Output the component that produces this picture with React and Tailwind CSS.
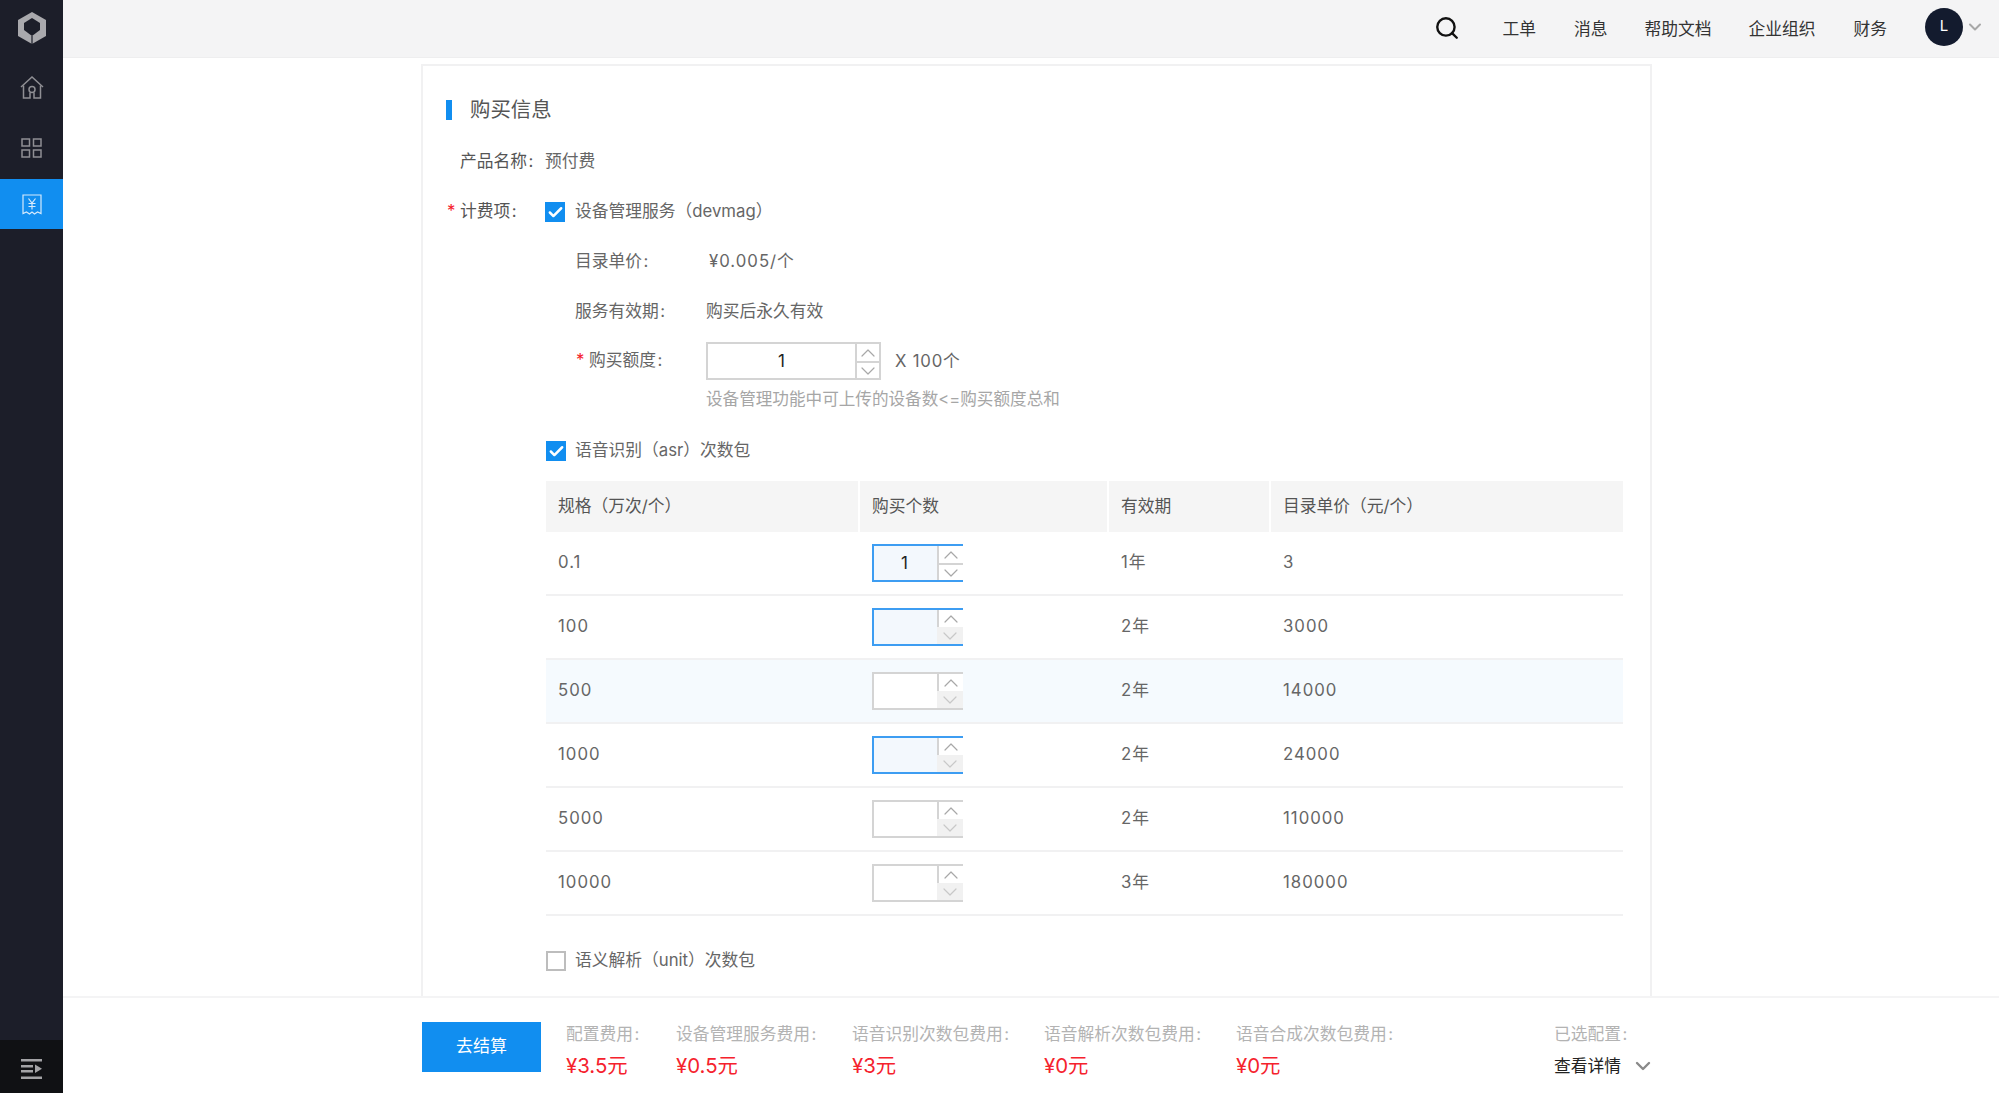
import React from 'react';
import { Search, ChevronDown, ChevronUp, Check } from 'lucide-react';

const ROWS = [
  { size: '0.1', value: '1', term: '1', price: '3', focus: true },
  { size: '100', term: '2', price: '3000', focus: true, downOff: true },
  { size: '500', term: '2', price: '14000', hover: true, downOff: true },
  { size: '1000', term: '2', price: '24000', focus: true, downOff: true },
  { size: '5000', term: '2', price: '110000', downOff: true },
  { size: '10000', term: '3', price: '180000', downOff: true },
];

const FEES = [
  { label: '配置费用\u200a:', value: '¥3.5元', width: 'w-[110px]' },
  { label: '设备管理服务费用\u200a:', value: '¥0.5元', width: 'w-[176px]' },
  { label: '语音识别次数包费用\u200a:', value: '¥3元', width: 'w-[192px]' },
  { label: '语音解析次数包费用\u200a:', value: '¥0元', width: 'w-[192px]' },
  { label: '语音合成次数包费用\u200a:', value: '¥0元', width: 'w-[318px]' },
];

function Logo() {
  return (
    <svg width="28" height="32" viewBox="0 0 28 32">
      <path d="M14 0 28 8v16l-14 8-14-8V8z" fill="#a9a9ad" />
      <path d="M14 6 22 11V18L14 24 6 18V11z" fill="#1c1e29" />
      <path d="M14 24v8" stroke="#1c1e29" strokeWidth="1.200" />
    </svg>
  );
}

function HomeIcon() {
  return (
    <svg width="24" height="23" viewBox="0 0 24 23" fill="none" stroke="#8f8f94" strokeWidth="1.500">
      <path d="M1 11 12 1l11 10" />
      <path d="M3.500 9.500V22H10V16.500M20.500 9.500V22H14V16.500" />
      <circle cx="12" cy="13.500" r="3" />
    </svg>
  );
}

function GridIcon() {
  return (
    <svg width="21" height="20" viewBox="0 0 21 20" fill="none" stroke="#8f8f94" strokeWidth="1.500">
      <rect x="1" y="1" width="7.500" height="7" />
      <rect x="12.500" y="1" width="7.500" height="7" />
      <rect x="1" y="12" width="7.500" height="7" />
      <rect x="12.500" y="12" width="7.500" height="7" />
    </svg>
  );
}

function ReceiptIcon() {
  return (
    <svg width="20" height="21" viewBox="0 0 20 21" fill="none" stroke="#d6eafc" strokeWidth="1.200">
      <path d="M1 1H19V19.500L15.500 18 12.500 20 10 18 7.500 20 4.500 18 1 19.500z" />
      <path d="M6.500 4.500 10 9l3.500-4.500M10 9v6.500M6.500 9.500H13.500M6.500 12.500H13.500" />
    </svg>
  );
}

function CollapseIcon() {
  return (
    <svg width="22" height="20" viewBox="0 0 22 20" fill="#a3a3a6">
      <rect x="0" y="0" width="21" height="2.500" />
      <rect x="0" y="6" width="12" height="2.500" />
      <rect x="0" y="11" width="12" height="2.500" />
      <rect x="0" y="17.500" width="21" height="2.500" />
      <path d="M14 5.500v8.500l7-4.250z" />
    </svg>
  );
}

function Stepper({ value, focus, downOff, wide }) {
  const line = focus ? 'border-[#3d9df2]' : 'border-[#d4d4d4]';
  return (
    <div className={`flex h-[38px] ${wide ? 'w-[175px]' : 'w-[91px]'}`}>
      <div className={`flex-1 flex items-center justify-center border-2 border-r-0 pt-[1px] text-[17px] text-[#222] ${line} ${focus ? 'bg-[#f3f8fd]' : 'bg-white'} ${wide ? '' : 'pr-[2px]'}`}>
        {value}
      </div>
      <div className={`w-[26px] flex flex-col border-y-2 ${line} ${wide ? 'border-r-2' : ''} bg-white`}>
        <div className="h-1/2 flex items-center justify-center overflow-hidden border-l-2 border-[#d4d4d4] text-[#a8a8a8]">
          <ChevronUp size={24} strokeWidth={1.200} className="shrink-0" />
        </div>
        <div className={`h-1/2 flex items-center justify-center overflow-hidden ${downOff ? 'bg-[#f1f1f1] text-[#c8c8c8]' : 'border-l-2 border-t-2 border-[#d4d4d4] text-[#a8a8a8]'}`}>
          <ChevronDown size={24} strokeWidth={1.200} className="shrink-0" />
        </div>
      </div>
    </div>
  );
}

function CheckBox({ checked }) {
  return checked ? (
    <span className="w-[20px] h-[20px] flex items-center justify-center bg-[#118ef0] text-white">
      <Check size={17} strokeWidth={3.500} />
    </span>
  ) : (
    <span className="w-[20px] h-[20px] border-2 border-[#bdbdbd] bg-white" />
  );
}

export default function App() {
  return (
    <div lang="zh-CN" className="h-screen flex overflow-hidden bg-white text-[16.750px] text-[#666] font-['Inter','Noto_Sans_CJK_SC',sans-serif]">
      {/* side nav */}
      <aside className="w-[63px] shrink-0 flex flex-col bg-[#1c1e29]">
        <div className="h-[56px] flex items-center justify-center"><Logo /></div>
        <div className="h-[62px] flex items-center justify-center"><HomeIcon /></div>
        <div className="h-[61px] pb-[2px] flex items-center justify-center"><GridIcon /></div>
        <div className="h-[50px] flex items-center justify-center bg-[#118ef0]"><ReceiptIcon /></div>
        <div className="flex-1" />
        <div className="h-[53px] pt-[4px] flex items-center justify-center bg-[#101114]"><CollapseIcon /></div>
      </aside>

      <div className="flex-1 min-w-0 flex flex-col">
        {/* top bar */}
        <header className="h-[58px] shrink-0 flex items-center justify-end bg-[#f4f4f5] border-b border-[#eeeeef] text-[#333]">
          <Search size={26} strokeWidth={2.200} className="text-[#111] mr-[42px] mb-[1px]" />
          <span className="mr-[38px] mt-[2px]">工单</span>
          <span className="mr-[37px] mt-[2px]">消息</span>
          <span className="mr-[37px] mt-[2px]">帮助文档</span>
          <span className="mr-[38px] mt-[2px]">企业组织</span>
          <span className="mr-[38px] mt-[2px]">财务</span>
          <span className="w-[38px] h-[38px] mb-[4px] rounded-full bg-[#131b2e] text-white text-[15px] flex items-center justify-center">L</span>
          <ChevronDown size={20} strokeWidth={2.400} className="text-[#a8a8a8] ml-[2px] mr-[14px] mb-[4px]" />
        </header>

        {/* form panel */}
        <main className="flex-1 min-h-0 overflow-hidden">
          <div className="ml-[358px] mt-[6px] w-[1231px] border-2 border-[#f1f1f2] pl-[22px] pr-[26px] pt-[34px]">
            <div className="ml-[1px] h-[20px] flex items-center">
              <span className="w-[6px] h-[20px] bg-[#118ef0]" />
              <h2 className="ml-[18px] text-[20.400px] text-[#555]">购买信息</h2>
            </div>

            <div className="mt-[17px] h-[50px] flex items-center">
              <span className="ml-[15px] w-[85px] text-[#555]">产品名称{'\u200a'}:</span>
              <span>预付费</span>
            </div>
            <div className="h-[50px] flex items-center">
              <span className="w-[15px] pl-[2px] text-[#f5222d]">*</span>
              <span className="w-[85px] text-[#555]">计费项{'\u200a'}:</span>
              <CheckBox checked />
              <span className="ml-[10px]">设备管理服务（devmag）</span>
            </div>
            <div className="h-[50px] flex items-center pl-[130px]">
              <span className="w-[134px]">目录单价{'\u200a'}:</span>
              <span><span className="tracking-[1px]">¥0.005/</span>个</span>
            </div>
            <div className="h-[50px] flex items-center pl-[130px]">
              <span className="w-[131px]">服务有效期{'\u200a'}:</span>
              <span>购买后永久有效</span>
            </div>

            <div className="mt-[5px] flex items-center pl-[131px]">
              <span className="w-[13px] text-[#f5222d]">*</span>
              <span className="w-[117px]">购买额度{'\u200a'}:</span>
              <Stepper value="1" wide />
              <span className="ml-[14px] mt-[2px]"><span className="tracking-[0.800px]">X 100</span>个</span>
            </div>
            <div className="mt-[7px] h-[24px] leading-[24px] pl-[261px] text-[16.600px] text-[#a6a6a6]">设备管理功能中可上传的设备数&lt;=购买额度总和</div>

            <div className="mt-[30px] h-[20px] flex items-center pl-[101px]">
              <CheckBox checked />
              <span className="ml-[9px]">语音识别（asr）次数包</span>
            </div>

            <div className="mt-[20px] ml-[101px] w-[1077px]">
              <div className="h-[51px] grid grid-cols-[314px_249px_162px_352px] text-[#555]">
                <div className="pl-3 flex items-center bg-[#f5f5f5] border-r-2 border-white">规格（万次/个）</div>
                <div className="pl-3 flex items-center bg-[#f5f5f5] border-r-2 border-white">购买个数</div>
                <div className="pl-3 flex items-center bg-[#f5f5f5] border-r-2 border-white">有效期</div>
                <div className="pl-3 flex items-center bg-[#f5f5f5]">目录单价（元/个）</div>
              </div>
              {ROWS.map(row => (
                <div key={row.size} className={`h-[64px] grid grid-cols-[314px_249px_162px_352px] items-center border-b-2 border-[#f1f1f2] ${row.hover ? 'bg-[#f5fafe]' : ''}`}>
                  <div className="pl-3 pb-[1px] tracking-[1px]">{row.size}</div>
                  <div className="pl-3"><Stepper value={row.value} focus={row.focus} downOff={row.downOff} /></div>
                  <div className="pl-3 pb-[1px]"><span className="tracking-[1px]">{row.term}</span>年</div>
                  <div className="pl-3 pb-[1px] tracking-[1px]">{row.price}</div>
                </div>
              ))}
            </div>

            <div className="mt-[35px] h-[20px] flex items-center pl-[101px]">
              <CheckBox />
              <span className="ml-[9px]">语义解析（unit）次数包</span>
            </div>
            <div className="h-[60px]" />
          </div>
        </main>

        {/* fee footer */}
        <footer className="h-[97px] shrink-0 flex items-center pl-[359px] pt-[3px] bg-white border-t-2 border-[#f4f4f5]">
          <button className="w-[119px] h-[50px] bg-[#118ef0] text-white text-[17px] mr-[25px]">去结算</button>
          {FEES.map(fee => (
            <div key={fee.label} className={`${fee.width} mt-[5px] flex flex-col gap-[8px]`}>
              <span className="leading-[24px] text-[#b3b3b3]">{fee.label}</span>
              <span className="leading-[24px] text-[20.400px] text-[#f5222d]">{fee.value}</span>
            </div>
          ))}
          <div className="mt-[5px] flex flex-col gap-[8px]">
            <span className="leading-[24px] text-[#b3b3b3]">已选配置{'\u200a'}:</span>
            <span className="leading-[24px] flex items-center text-[#222]">
              查看详情
              <ChevronDown size={24} strokeWidth={2.400} className="ml-[10px] text-[#8a8a8a]" />
            </span>
          </div>
        </footer>
      </div>
    </div>
  );
}
